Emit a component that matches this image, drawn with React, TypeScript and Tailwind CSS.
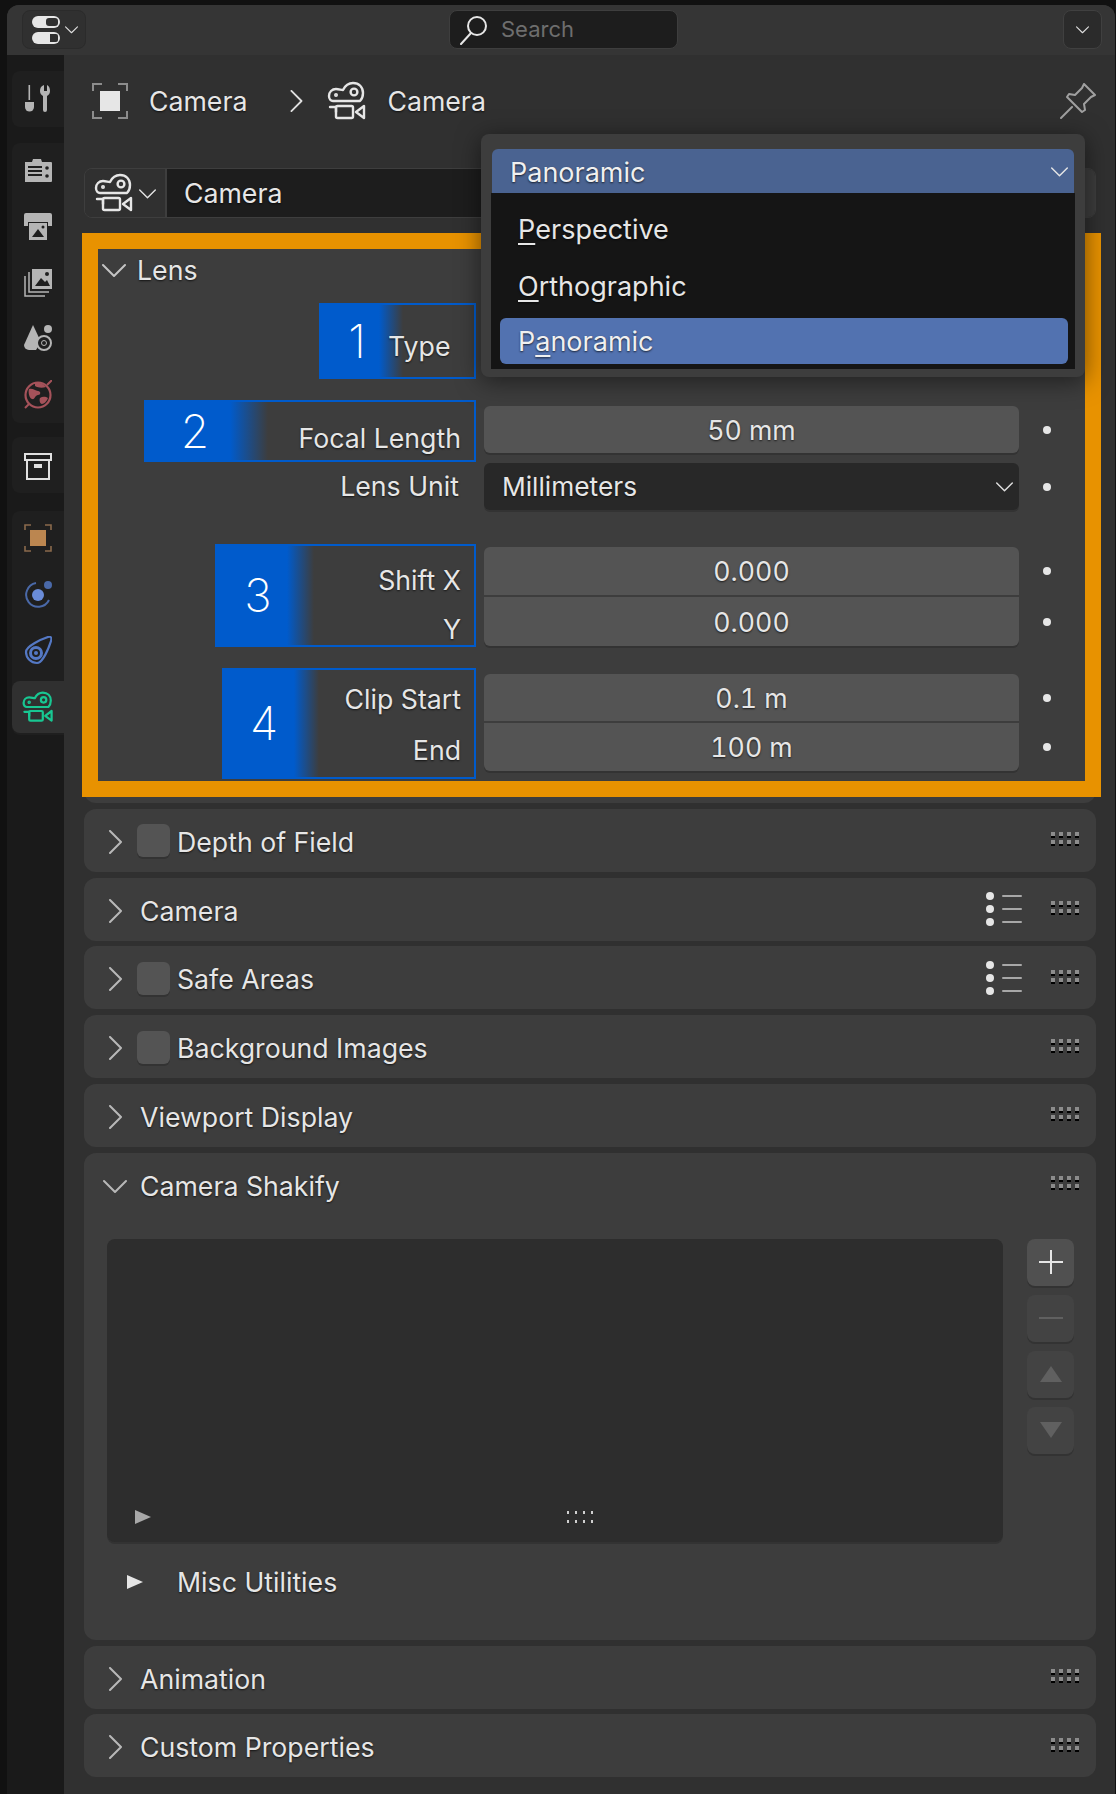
const shadow = '[text-shadow:0_1px_2px_rgba(0,0,0,0.7)]';

const CameraIcon = ({ className = 'text-[#e6e6e6]' }: { className?: string }) => (
  <svg viewBox="0 0 40 40" className={`w-[40px] h-[40px] ${className}`} fill="none" stroke="currentColor" strokeWidth="2.4" strokeLinejoin="round" strokeLinecap="round">
    <path d="M2 15c0-4 3-7 7-7 3 0 5 1 7 1 2-4 5-7 10-7 6 0 10 4 10 10 0 4-1 6-3 8H6c-2 0-4-2-4-5z" />
    <circle cx="27" cy="11" r="3.4" />
    <circle cx="9" cy="14" r="0.8" fill="currentColor" />
    <path d="M3 26h6v5" />
    <rect x="9" y="25" width="17" height="12" rx="1.5" />
    <path d="M37 25v12l-8-6z" />
  </svg>
);

const Chevron = ({ dir, className = '' }: { dir: 'right' | 'down'; className?: string }) => (
  <svg viewBox="0 0 24 24" className={className} fill="none" stroke="currentColor" strokeWidth="2" strokeLinecap="round" strokeLinejoin="round">
    {dir === 'right' ? <path d="M7 1l11 11L7 23" /> : <path d="M1 7l11 11L23 7" />}
  </svg>
);

const Grip = () => (
  <svg viewBox="0 0 28 14" className="w-[28px] h-[14px]">
    {[0, 1, 2, 3].map((i) =>
      [0, 1].map((j) => (
        <g key={`${i}-${j}`}>
          <rect x={i * 8} y={j * 8} width="4" height="4" fill="#8c8c8c" />
          <rect x={i * 8} y={j * 8 + 4} width="4" height="2" fill="#000" />
        </g>
      )),
    )}
  </svg>
);

const ListIcon = () => (
  <svg viewBox="0 0 36 34" className="w-[36px] h-[34px]">
    {[4, 17, 30].map((y) => (
      <g key={y}>
        <circle cx="4" cy={y} r="4" fill="#e6e6e6" />
        <rect x="16" y={y - 1} width="20" height="2" rx="1" fill="#a8a8a8" />
      </g>
    ))}
  </svg>
);

const sideIcons: Record<string, React.ReactNode> = {
  tool: (
    <g fill="#b5b5b5">
      <rect x="4.5" y="1" width="1.6" height="15" />
      <path d="M1 18h9v5a4.5 4.5 0 0 1-9 0z" />
      <path d="M17 1c-3 1-4 3-4 6 0 2 1 4 3 5v14a2 2 0 0 0 4 0V12c2-1 3-3 3-5 0-3-1-5-3-6v6h-3z" transform="translate(3 0)" />
    </g>
  ),
  render: (
    <g>
      <path d="M1 6h7l1-3h8l1 3h9a1 1 0 0 1 1 1v18a1 1 0 0 1-1 1H1z" fill="#b5b5b5" />
      <rect x="4" y="10" width="14" height="2" fill="#1f1f1f" />
      <rect x="4" y="14" width="14" height="2" fill="#1f1f1f" />
      <rect x="4" y="18" width="14" height="2" fill="#1f1f1f" />
      <circle cx="23" cy="12" r="1.8" fill="#1f1f1f" />
      <circle cx="23" cy="20" r="1.8" fill="#1f1f1f" />
    </g>
  ),
  output: (
    <g fill="#b5b5b5">
      <path d="M2 1h24a2 2 0 0 1 2 2v11h-4v-4H4v4H0V3a2 2 0 0 1 2-2z" />
      <path d="M5 11h18v17H5z" />
      <path d="M8 25l6-8 6 8z" fill="#1f1f1f" />
      <circle cx="19" cy="15" r="1.5" fill="#1f1f1f" />
    </g>
  ),
  layer: (
    <g>
      <path d="M8 1h20v20H8z" fill="#b5b5b5" />
      <path d="M11 18l6-8 4 4 2-2 3 6z" fill="#1f1f1f" />
      <circle cx="23" cy="6" r="2" fill="#1f1f1f" />
      <path d="M5 4v20h20M1 8v20h20" fill="none" stroke="#b5b5b5" strokeWidth="1.5" />
    </g>
  ),
  scene: (
    <g>
      <path d="M9 1l8 17-5 8H5a5 5 0 0 1-5-5z" fill="#b5b5b5" />
      <circle cx="24" cy="5" r="4" fill="#b5b5b5" />
      <circle cx="20" cy="19" r="7" fill="#1f1f1f" stroke="#b5b5b5" strokeWidth="2" />
      <circle cx="20" cy="19" r="2.5" fill="none" stroke="#b5b5b5" strokeWidth="1" />
    </g>
  ),
  world: (
    <g>
      <circle cx="14" cy="15" r="12.5" fill="none" stroke="#a5525a" strokeWidth="2.2" />
      <path d="M5 9c4-1 6 2 9 2s3 4 0 4-3 5-6 4-4-7-3-10zM16 18c3-2 6-1 8 0-1 3-4 6-6 6s-3-4-2-6zM11 3c4-1 8 0 11 4-3 1-8 1-11-1z" fill="#a5525a" />
      <path d="M1 28l4-4M23 5l5-5" stroke="#a5525a" strokeWidth="2" />
    </g>
  ),
  collection: (
    <g fill="none" stroke="#e0e0e0" strokeWidth="2" transform="translate(0 3)">
      <rect x="1" y="1" width="26" height="6" />
      <path d="M3 7v19h22V7" />
      <rect x="11" y="12" width="6" height="2" fill="#e0e0e0" />
    </g>
  ),
  object: (
    <g>
      <path d="M1 6V1h6M21 1h6v5M27 22v5h-6M7 27H1v-5" fill="none" stroke="#8a6a4c" strokeWidth="1.6" />
      <rect x="6" y="6" width="16" height="16" fill="#bb8650" />
    </g>
  ),
  physics: (
    <g>
      <path d="M12 3a12 12 0 1 0 13 17" fill="none" stroke="#4a69a8" strokeWidth="2" />
      <circle cx="14" cy="15" r="6" fill="#6a8cd8" />
      <circle cx="24" cy="5" r="4" fill="#4a69a8" />
    </g>
  ),
  constraint: (
    <g>
      <path d="M2 16C2 10 18 3 24 1c3-1 4 1 3 4-2 6-8 22-14 22C7 27 2 22 2 16z" fill="none" stroke="#5478c4" strokeWidth="2.2" />
      <circle cx="12" cy="17" r="5.5" fill="none" stroke="#5478c4" strokeWidth="3" />
      <circle cx="12" cy="17" r="2" fill="#5478c4" />
    </g>
  ),
};

const SideTab = ({ name }: { name: string }) => (
  <div className="h-[56px] flex items-center justify-center">
    <svg viewBox="0 0 28 30" className="w-[28px] h-[30px]">
      {sideIcons[name]}
    </svg>
  </div>
);

const Sidebar = () => (
  <div className="w-[57px] shrink-0 bg-[#1a1a1a] flex flex-col pl-[5px] pt-[16px]">
    <div className="rounded-l-lg bg-[#1f1f1f]">
      <SideTab name="tool" />
    </div>
    <div className="rounded-l-lg bg-[#1f1f1f] mt-[16px]">
      {['render', 'output', 'layer', 'scene', 'world'].map((n) => (
        <SideTab key={n} name={n} />
      ))}
    </div>
    <div className="rounded-l-lg bg-[#1f1f1f] mt-[14px]">
      <SideTab name="collection" />
    </div>
    <div className="rounded-l-lg bg-[#1f1f1f] mt-[18px]">
      {['object', 'physics', 'constraint'].map((n) => (
        <SideTab key={n} name={n} />
      ))}
      <div className="h-[52px] my-[2px] rounded-l-lg bg-[#303030] flex items-center justify-center">
        <svg viewBox="0 0 40 40" className="w-[32px] h-[32px] text-[#18c792]" fill="none" stroke="currentColor" strokeWidth="2.8" strokeLinejoin="round" strokeLinecap="round">
          <path d="M2 15c0-4 3-7 7-7 3 0 5 1 7 1 2-4 5-7 10-7 6 0 10 4 10 10 0 4-1 6-3 8H6c-2 0-4-2-4-5z" />
          <circle cx="27" cy="11" r="3.4" />
          <circle cx="9" cy="14" r="0.8" fill="currentColor" />
          <path d="M3 26h6v5" />
          <rect x="9" y="25" width="17" height="12" rx="1.5" />
          <path d="M37 25v12l-8-6z" />
        </svg>
      </div>
    </div>
  </div>
);

const TopBar = () => (
  <div className="h-[50px] shrink-0 bg-[#353535] flex items-center pl-[15px] pr-[13px] pb-[1px] rounded-t-xl">
    <div className="w-[64px] h-[39px] rounded-lg border border-[#2b2b2b] bg-[#303030] flex items-center pl-[9px]">
      <svg viewBox="0 0 28 30" className="w-[28px] h-[30px]">
        <rect x="0" y="1" width="28" height="12" rx="6" fill="#e6e6e6" />
        <rect x="14" y="3" width="12" height="8" rx="3" fill="#303030" />
        <rect x="0" y="17" width="28" height="12" rx="6" fill="#e6e6e6" />
        <path d="M18 19h6a2 2 0 0 1 2 2v4a2 2 0 0 1-2 2h-6z" fill="#303030" />
      </svg>
      <Chevron dir="down" className="w-[13px] h-[13px] ml-[5px] text-[#e0e0e0]" />
    </div>
    <div className="ml-[363px] w-[229px] h-[39px] rounded-lg border border-[#3e3e3e] bg-[#1d1d1d] flex items-center pl-[10px]">
      <svg viewBox="0 0 28 30" className="w-[28px] h-[30px] text-[#e6e6e6]" fill="none" stroke="currentColor" strokeWidth="2" strokeLinecap="round">
        <circle cx="17" cy="11" r="9" />
        <path d="M11 18L1 29" />
      </svg>
      <span className="ml-[13px] text-[22px] text-[#6e6e6e]">Search</span>
    </div>
    <div className="ml-auto w-[39px] h-[39px] rounded-lg border border-[#404040] bg-[#2b2b2b] flex items-center justify-center">
      <Chevron dir="down" className="w-[13px] h-[13px] text-[#e0e0e0]" />
    </div>
  </div>
);

const PanelHeader = ({ title, open, check, list }: { title: string; open?: boolean; check?: boolean; list?: boolean }) => (
  <div className="h-[63px] flex items-center pr-[17px]">
    <div className="w-[53px] shrink-0 flex justify-center pt-[3px] pl-[9px]">
      {open ? (
        <Chevron dir="down" className="w-[24px] h-[24px] text-[#b8b8b8]" />
      ) : (
        <Chevron dir="right" className="w-[24px] h-[24px] text-[#b8b8b8]" />
      )}
    </div>
    {check ? (
      <div className="w-[33px] h-[33px] mt-[1px] mr-[7px] rounded-md bg-[#545454] shadow-[0_2px_0_#333333]" />
    ) : (
      <div className="w-[3px]" />
    )}
    <span className={`pt-[3px] text-[26.7px] text-[#e6e6e6] ${shadow}`}>{title}</span>
    {list && (
      <div className="ml-auto mr-[29px]">
        <ListIcon />
      </div>
    )}
    <div className={list ? 'mb-[2px]' : 'ml-auto mb-[2px]'}>
      <Grip />
    </div>
  </div>
);

const Panel = ({ title, check, list }: { title: string; check?: boolean; list?: boolean }) => (
  <div className="rounded-xl bg-[#3d3d3d]">
    <PanelHeader title={title} check={check} list={list} />
  </div>
);

const Dot = () => (
  <div className="w-[56px] shrink-0 flex items-center justify-center">
    <div className="w-[8px] h-[8px] rounded-full bg-[#e6e6e6]" />
  </div>
);

const FieldRow = ({ value, h, round }: { value: string; h: string; round: string }) => (
  <div className="flex">
    <div className={`w-[535px] ${h} ${round} bg-[#545454] flex items-center justify-center pt-[1px] text-[26.7px] tabular-nums text-[#e6e6e6] ${shadow}`}>
      {value}
    </div>
    <Dot />
  </div>
);

const Label = ({ children, className = '' }: { children: React.ReactNode; className?: string }) => (
  <div className={`h-[34px] leading-[34px] text-right text-[26.7px] text-[#e6e6e6] ${shadow} ${className}`}>{children}</div>
);

const Annot = ({ digit, width, stops, digitW, children, h }: { digit: string; width: string; stops: string; digitW: string; children: React.ReactNode; h: string }) => (
  <div className={`relative ml-auto ${width} ${h} border-2 border-[#005bcc] ${stops}`}>
    <div className={`absolute inset-y-0 left-0 ${digitW} flex items-center justify-center text-[46px] font-extralight text-white`}>{digit}</div>
    {children}
  </div>
);

const LensPanel = () => (
  <div className="rounded-xl bg-[#3d3d3d] pb-[6px]">
    <div className="ml-[-2px] mr-[-5px] border-[16px] border-[#e89200] h-[564px] flex flex-col">
      <div className="h-[42px] flex items-center pl-[4px]">
        <Chevron dir="down" className="w-[24px] h-[24px] text-[#c4c4c4]" />
        <span className={`ml-[11px] text-[26.7px] text-[#e6e6e6] ${shadow}`}>Lens</span>
      </div>

      <div className="mt-[12px] flex h-[76px]">
        <div className="w-[378px] shrink-0">
          <Annot digit="1" width="w-[157px]" h="h-[76px]" digitW="w-[72px]" stops="bg-[linear-gradient(to_right,#005bcc_58px,transparent_82px)]">
            <div className={`absolute left-[67px] top-[21px] text-[26.7px] text-[#e6e6e6] ${shadow}`}>Type</div>
          </Annot>
        </div>
        <div className="w-[535px] h-[47px] mt-[17px] ml-[8px] rounded-md bg-[#282828]" />
      </div>

      <div className="mt-[21px] flex h-[62px]">
        <div className="w-[378px] shrink-0">
          <Annot digit="2" width="w-[332px]" h="h-[62px]" digitW="w-[98px]" stops="bg-[linear-gradient(to_right,#005bcc_84px,transparent_122px)]">
            <div className="absolute inset-0 flex items-end justify-end pr-[13px] pb-[5px]">
              <Label>Focal Length</Label>
            </div>
          </Annot>
        </div>
        <div className="ml-[8px] mt-[6px]">
          <FieldRow value="50 mm" h="h-[47px]" round="rounded-md shadow-[0_2px_0_#333333]" />
        </div>
      </div>

      <div className="mt-[1px] flex h-[47px]">
        <div className="w-[378px] shrink-0 flex items-center justify-end pr-[17px] pb-[2px]">
          <Label>Lens Unit</Label>
        </div>
        <div className="ml-[8px] flex">
          <div className={`w-[535px] h-[47px] rounded-md bg-[#282828] shadow-[0_2px_0_#333333] flex items-center justify-between pl-[18px] pr-[6px] text-[26.3px] text-[#e6e6e6] ${shadow}`}>
            <span>Millimeters</span>
            <Chevron dir="down" className="w-[17px] h-[17px] text-[#e0e0e0]" />
          </div>
          <Dot />
        </div>
      </div>

      <div className="mt-[34px] flex h-[103px]">
        <div className="w-[378px] shrink-0">
          <Annot digit="3" width="w-[261px]" h="h-[103px]" digitW="w-[82px]" stops="bg-[linear-gradient(to_right,#005bcc_70px,transparent_97px)]">
            <div className="absolute inset-0 flex flex-col items-end pr-[13px] pt-[17px] gap-[15px]">
              <Label>Shift X</Label>
              <Label>Y</Label>
            </div>
          </Annot>
        </div>
        <div className="ml-[8px] mt-[3px] flex flex-col gap-[2px]">
          <FieldRow value="0.000" h="h-[48px]" round="rounded-t-md" />
          <FieldRow value="0.000" h="h-[49px]" round="rounded-b-md shadow-[0_2px_0_#333333]" />
        </div>
      </div>

      <div className="mt-[21px] flex h-[111px]">
        <div className="w-[378px] shrink-0">
          <Annot digit="4" width="w-[254px]" h="h-[111px]" digitW="w-[80px]" stops="bg-[linear-gradient(to_right,#005bcc_70px,transparent_95px)]">
            <div className="absolute inset-0 flex flex-col items-end pr-[13px] pt-[12px] gap-[17px]">
              <Label>Clip Start</Label>
              <Label>End</Label>
            </div>
          </Annot>
        </div>
        <div className="ml-[8px] mt-[6px] flex flex-col gap-[2px]">
          <FieldRow value="0.1 m" h="h-[47px]" round="rounded-t-md" />
          <FieldRow value="100 m" h="h-[48px]" round="rounded-b-md shadow-[0_2px_0_#333333]" />
        </div>
      </div>
    </div>
  </div>
);

const SideButton = ({ active, children }: { active?: boolean; children: React.ReactNode }) => (
  <div className={`w-[47px] h-[47px] rounded-lg flex items-center justify-center shadow-[0_2px_0_#333333] ${active ? 'bg-[#505050]' : 'bg-[#434343]'}`}>
    {children}
  </div>
);

const ShakifyPanel = () => (
  <div className="rounded-xl bg-[#3d3d3d] h-[487px]">
    <PanelHeader title="Camera Shakify" open />
    <div className="mt-[23px] ml-[23px] flex items-start">
      <div className="w-[896px] h-[303px] rounded-lg bg-[#2d2d2d] shadow-[0_2px_0_#333333] flex flex-col justify-end">
        <div className="h-[42px] flex items-center pl-[28px] pb-[7px]">
          <svg viewBox="0 0 16 14" className="w-[16px] h-[14px]"><path d="M0 0l16 7-16 7z" fill="#a8a8a8" /></svg>
          <svg viewBox="0 0 28 12" className="w-[28px] h-[12px] ml-[415px]">
            {[0, 1, 2, 3].map((i) =>
              [0, 1].map((j) => <rect key={`${i}${j}`} x={i * 8 + 1} y={j * 9} width="2" height="3" fill="#cfcfcf" />),
            )}
          </svg>
        </div>
      </div>
      <div className="ml-[24px] flex flex-col gap-[9px]">
        <SideButton active>
          <svg viewBox="0 0 24 24" className="w-[24px] h-[24px]"><path d="M12 0v24M0 12h24" stroke="#e6e6e6" strokeWidth="2" /></svg>
        </SideButton>
        <SideButton>
          <svg viewBox="0 0 24 24" className="w-[24px] h-[24px]"><path d="M0 12h24" stroke="#606060" strokeWidth="2" /></svg>
        </SideButton>
        <SideButton>
          <svg viewBox="0 0 22 16" className="w-[22px] h-[16px]"><path d="M11 0l11 16H0z" fill="#606060" /></svg>
        </SideButton>
        <SideButton>
          <svg viewBox="0 0 22 16" className="w-[22px] h-[16px]"><path d="M11 16L0 0h22z" fill="#606060" /></svg>
        </SideButton>
      </div>
    </div>
    <div className="mt-[20px] h-[40px] flex items-center pl-[43px]">
      <svg viewBox="0 0 16 14" className="w-[16px] h-[14px]"><path d="M0 0l16 7-16 7z" fill="#e6e6e6" /></svg>
      <span className={`ml-[34px] text-[26.7px] text-[#e6e6e6] ${shadow}`}>Misc Utilities</span>
    </div>
  </div>
);

const TypeMenu = () => (
  <div className="absolute left-[481px] top-[134px] w-[604px] h-[243px] rounded-lg bg-[#3d3d3d] shadow-[0_4px_24px_rgba(0,0,0,0.5)] pt-[15px] px-[10px]">
    <div className={`h-[44px] mx-[1px] rounded-t-md bg-[#4a6391] flex items-center justify-between pl-[18px] pr-[6px] text-[27px] text-[#f0f0f0] ${shadow}`}>
      <span className="pt-[4px]">Panoramic</span>
      <Chevron dir="down" className="w-[17px] h-[17px] text-[#e6e6e6]" />
    </div>
    <div className={`h-[176px] bg-[#151515] flex flex-col text-[27px] text-[#e6e6e6] ${shadow}`}>
      <div className="h-[57px] mt-[7px] flex items-center pl-[27px] pt-[3px]"><span className="underline underline-offset-4">P</span>erspective</div>
      <div className="h-[57px] flex items-center pl-[27px] pt-[3px]"><span className="underline underline-offset-4">O</span>rthographic</div>
      <div className="h-[46px] ml-[9px] mr-[7px] mt-[4px] rounded-md bg-[#5272b0] flex items-center pl-[18px] pt-[2px] text-[#f0f0f0]">
        <span>P<span className="underline underline-offset-4">a</span>noramic</span>
      </div>
    </div>
  </div>
);

export default function App() {
  return (
    <div className="relative w-[1116px] h-[1794px] overflow-hidden bg-[#111111] pt-[5px] pl-[7px] pr-[1px] font-['Inter',sans-serif]">
      <div className="h-full flex flex-col rounded-t-xl bg-[#303030]">
        <TopBar />
        <div className="flex-1 flex min-h-0">
          <Sidebar />
          <div className="flex-1 min-w-0 pl-[20px] pr-[19px]">
            <div className="h-[92px] flex items-center pl-[8px]">
              <svg viewBox="0 0 36 36" className="w-[36px] h-[36px]">
                <path d="M1 8V1h9M26 1h9v7M35 28v7h-9M10 35H1v-7" fill="none" stroke="#8c8c8c" strokeWidth="2" />
                <rect x="8" y="8" width="20" height="20" fill="#e6e6e6" />
              </svg>
              <span className={`ml-[21px] text-[26.7px] text-[#e6e6e6] ${shadow}`}>Camera</span>
              <Chevron dir="right" className="w-[22px] h-[22px] ml-[38px] text-[#e0e0e0]" />
              <CameraIcon className="ml-[20px] text-[#e6e6e6]" />
              <span className={`ml-[20px] text-[26.7px] text-[#e6e6e6] ${shadow}`}>Camera</span>
              <svg viewBox="0 0 36 36" className="w-[36px] h-[36px] ml-auto" fill="none" stroke="#a0a0a0" strokeWidth="2" strokeLinejoin="round" strokeLinecap="round">
                <path d="M24 1l11 11-4 2-7 7 1 6-3 2-15-15 2-3 6 1 7-7z" />
                <path d="M12 24L1 35" />
              </svg>
            </div>

            <div className="h-[50px] mt-[21px] flex rounded-lg border border-[#3e3e3e] overflow-hidden">
              <div className="w-[80px] shrink-0 bg-[#303030] flex items-center pl-[9px]">
                <CameraIcon />
                <Chevron dir="down" className="w-[17px] h-[17px] ml-[5px] text-[#e0e0e0]" />
              </div>
              <div className={`flex-1 bg-[#1d1d1d] border-l-2 border-[#3e3e3e] flex items-center pl-[17px] text-[26.7px] text-[#e6e6e6] ${shadow}`}>Camera</div>
              <div className="w-[11px] bg-[#3d3d3d]" />
            </div>

            <div className="mt-[15px] flex flex-col gap-[5.8px]">
              <LensPanel />
              <Panel title="Depth of Field" check />
              <Panel title="Camera" list />
              <Panel title="Safe Areas" check list />
              <Panel title="Background Images" check />
              <Panel title="Viewport Display" />
              <ShakifyPanel />
              <Panel title="Animation" />
              <Panel title="Custom Properties" />
            </div>
          </div>
        </div>
      </div>
      <TypeMenu />
    </div>
  );
}
